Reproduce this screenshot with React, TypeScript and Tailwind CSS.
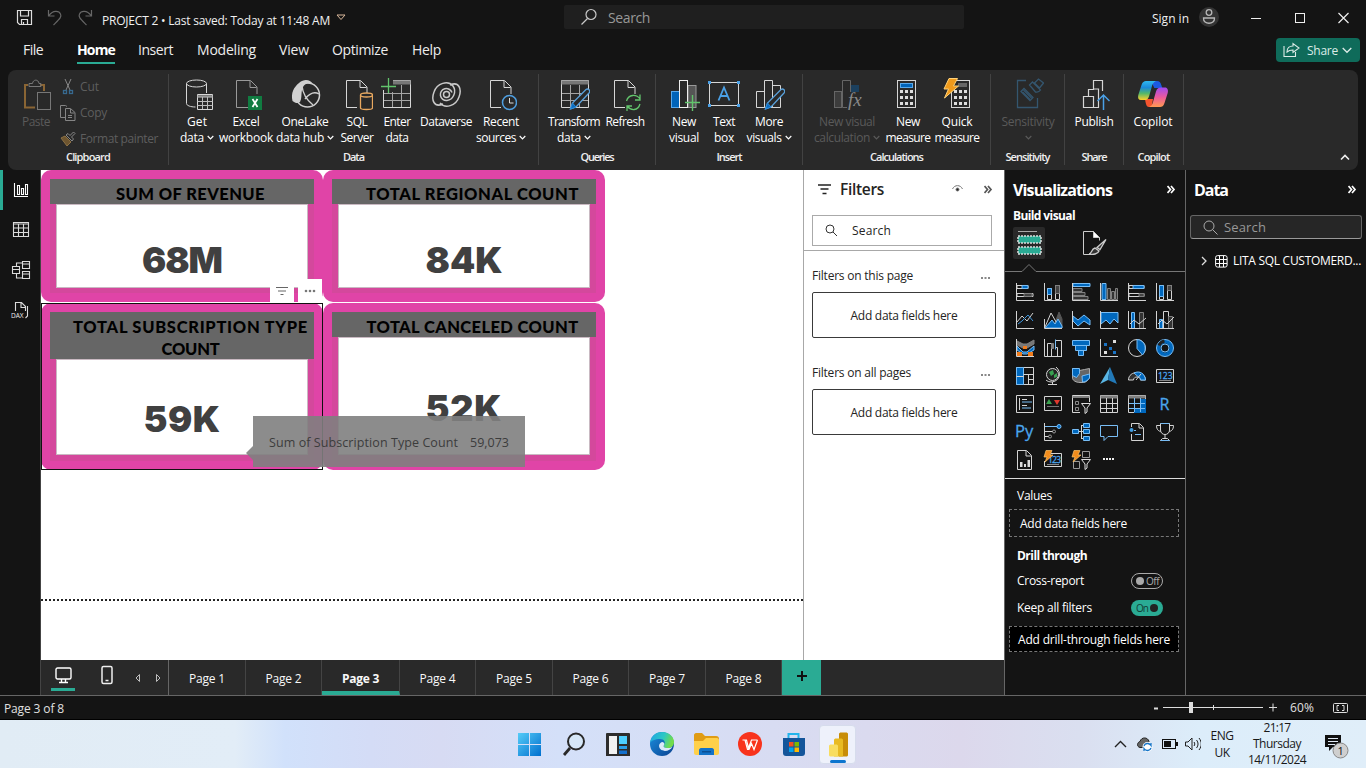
import { useLayoutEffect, useRef, useState } from "react";
import type { ReactNode } from "react";

/* Text set to a given advance width by evening out its letter spacing. */
function Fit({ w, children, className = "" }: { w: number; children: string; className?: string }) {
  const ref = useRef<HTMLSpanElement>(null);
  const [ls, setLs] = useState(0);
  useLayoutEffect(() => {
    const el = ref.current;
    if (!el) return;
    el.style.letterSpacing = "0px";
    el.style.width = "max-content";
    const n = el.getBoundingClientRect().width;
    const v = (w - n) / children.length;
    el.style.letterSpacing = v + "px";
    el.style.width = w + "px";
    setLs(v);
  }, [w, children]);
  return (
    <span ref={ref} className={"inline-block shrink-0 whitespace-pre text-left " + className} style={{ letterSpacing: ls, width: w }}>
      {children}
    </span>
  );
}

const Chev = ({ className = "" }: { className?: string }) => (
  <svg width="7" height="5" viewBox="0 0 7 5" fill="none" stroke="currentColor" strokeWidth="1.2" className={"shrink-0 " + className}>
    <path d="M.7 1l2.8 2.8L6.300 1" />
  </svg>
);

function Btn({ cls, l1, w1, l2, w2, chev, dim, icon }: { cls: string; l1: string; w1: number; l2?: string; w2?: number; chev?: boolean; dim?: boolean; icon: ReactNode }) {
  return (
    <div className={"flex shrink-0 flex-col items-center " + cls + (dim ? " text-[#5a5a5a]" : " font-medium text-white")}>
      <svg width="32" height="34" viewBox="0 0 32 34" fill="none" className="shrink-0">{icon}</svg>
      <div className="flex h-[17px] items-center pt-[2px] text-[12px] leading-[17px]"><Fit w={w1}>{l1}</Fit></div>
      <div className="flex h-[17px] items-center gap-[3px] text-[12px] leading-[17px]">
        {l2 && <Fit w={w2 || 30}>{l2}</Fit>}
        {chev && <Chev />}
      </div>
    </div>
  );
}

function Group({ cls, label, lw, children }: { cls: string; label: string; lw: number; children?: ReactNode }) {
  return (
    <div className={"flex shrink-0 flex-col " + cls}>
      <div className="flex h-[71px]">{children}</div>
      <div className="flex h-[16px] items-center justify-center text-[11px] leading-4 font-semibold text-[#eee]">
        <Fit w={lw}>{label}</Fit>
      </div>
    </div>
  );
}
const Sep = () => <div className="-mt-1 h-[91px] w-px shrink-0 bg-[#424242]" />;

const Doc = () => <path d="M16 29.500H5.500v-27h14l6.500 6.500v7M19 3v6.500h6.500" stroke="#d6d6d6" />;
const Pencil = () => (
  <>
    <path d="M12.500 31l2-6L28 11.500c2-1.500 5 1 3 3.500L18 29z" fill="#292929" stroke="#5aa2dc" strokeWidth="1.300" />
    <path d="M12.500 31l2-6 3.500 4z" fill="#0a6cc0" stroke="#2a8ad8" />
  </>
);
const Calc = ({ x }: { x: number }) => (
  <>
    <rect x={x + 0.5} y="2.500" width="18" height="27" stroke="#d6d6d6" />
    {[0, 1, 2].map((r) => [0, 1, 2].map((c) => <rect key={r + "-" + c} x={x + 3 + c * 5} y={12 + r * 6} width="3" height="3" fill="#ddd" />))}
  </>
);

function TitleBar() {
  return (
    <div className="flex h-[34px] shrink-0 items-center text-[#f0f0f0]">
      <svg width="17" height="17" viewBox="0 0 17 17" fill="none" stroke="#dedede" strokeWidth="1.200" className="ml-4 shrink-0">
        <path d="M1.500 1.500h14v14h-12l-2-2zM4.500 2v5h8V2M5.500 15.500v-5h6v5M7.500 13v2" />
      </svg>
      <svg width="16" height="17" viewBox="0 0 16 17" fill="none" stroke="#666" strokeWidth="1.200" className="ml-[14px] shrink-0">
        <path d="M1.500 1v6h6M2 6.500C6 1 12 1.500 13.500 5c1.500 3-1 5-7 11" />
      </svg>
      <svg width="16" height="17" viewBox="0 0 16 17" fill="none" stroke="#666" strokeWidth="1.200" className="ml-[14px] shrink-0">
        <path d="M14.500 1v6h-6M14 6.500C10 1 4 1.500 2.500 5c-1.500 3 1 5 7 11" />
      </svg>
      <Fit w={228} className="mt-[8px] ml-[9px] text-[12px]">PROJECT 2 • Last saved: Today at 11:48 AM</Fit>
      <svg width="10" height="7" viewBox="0 0 10 7" fill="none" stroke="#d8b79a" className="mt-px ml-[6px] shrink-0"><path d="M1 1h8L5 5.500z" /></svg>
      <div className="ml-[218px] flex h-6 w-[400px] shrink-0 items-center rounded-[2px] bg-[#1f1f1f]">
        <svg width="18" height="18" viewBox="0 0 18 18" fill="none" stroke="#c8c8c8" strokeWidth="1.200" className="ml-4"><circle cx="11" cy="6.500" r="5" /><path d="M7.500 10.500l-6 6" /></svg>
        <Fit w={42} className="ml-[10px] text-[14px] text-[#989898]">Search</Fit>
      </div>
      <Fit w={37} className="mt-[3px] ml-[188px] text-[12px]">Sign in</Fit>
      <svg width="20" height="20" viewBox="0 0 20 20" fill="none" stroke="#b8b8b8" strokeWidth="1.300" className="ml-[10px] shrink-0">
        <circle cx="10" cy="10" r="10" fill="#333" stroke="none" /><circle cx="10" cy="5.500" r="2.800" /><path d="M4.500 11h11c.5 7-11.500 7-11 0z" />
      </svg>
      <svg width="110" height="14" viewBox="0 0 110 14" fill="none" stroke="#eee" className="mt-px ml-[26px] shrink-0">
        <path d="M6 7.500h10" /><rect x="50.500" y="2.500" width="9" height="9" /><path d="M93.500 2l10 10M103.500 2l-10 10" strokeWidth="1.200" />
      </svg>
    </div>
  );
}

function MenuBar() {
  return (
    <div className="flex h-9 shrink-0 items-center text-[14px] leading-[22px] text-[#ededed]">
      <Fit w={20} className="-mt-[4px] ml-[23px]">File</Fit>
      <div className="-mt-px ml-[34px] flex h-[25px] flex-col border-b-2 border-[#2aab94] font-bold text-white">
        <Fit w={38}>Home</Fit>
      </div>
      <Fit w={35} className="-mt-[4px] ml-[23px]">Insert</Fit>
      <Fit w={59} className="-mt-[4px] ml-[24px]">Modeling</Fit>
      <Fit w={30} className="-mt-[4px] ml-[23px]">View</Fit>
      <Fit w={56} className="-mt-[4px] ml-[23px]">Optimize</Fit>
      <Fit w={29} className="-mt-[4px] ml-[24px]">Help</Fit>
      <div className="-mt-1 mr-[6px] ml-auto flex h-6 w-[84px] items-center rounded-[4px] bg-[#0f6b5a] text-[#dcebe7]">
        <svg width="17" height="16" viewBox="0 0 17 16" fill="none" stroke="currentColor" strokeWidth="1.100" className="ml-[7px]">
          <path d="M1 4v10.500h11.500V10M4 10c0-4 2.500-6 6-6V1.500L16 6l-6 4.500V8C7.500 8 5.500 8.500 4 10z" />
        </svg>
        <Fit w={31} className="mt-[2px] ml-[7px] text-[12px]">Share</Fit>
        <svg width="10" height="7" viewBox="0 0 10 7" fill="none" stroke="currentColor" strokeWidth="1.300" className="ml-1"><path d="M.7 1L5 5.300 9.300 1" /></svg>
      </div>
    </div>
  );
}

function Ribbon() {
  return (
    <div className="mx-2 flex h-[100px] shrink-0 rounded-[8px] bg-[#292929] pt-2">
      <Group cls="w-[160px]" label="Clipboard" lw={44}>
        <Btn cls="ml-[12px] w-[32px]" dim l1="Paste" w1={28} icon={
          <>
            <path d="M8 7H5v22.500H15M20 7h4v6" stroke="#8a6534" strokeWidth="2" />
            <path d="M9 8.500V5.500h3.500c.5-4.500 6-4.500 6.500 0H21v3z" stroke="#777" /><rect x="17.500" y="14.500" width="13" height="17" stroke="#777" />
          </>} />
        <div className="ml-[8px] flex flex-col text-[12px] text-[#5e5e5e]">
          <div className="flex h-[18px] items-center">
            <svg width="16" height="16" viewBox="0 0 16 16" fill="none"><path d="M5 0l5 11M11 0L6 11" stroke="#888" /><rect x="3.500" y="11.500" width="3" height="3" stroke="#37698f" strokeWidth="1.300" /><rect x="9.500" y="11.500" width="3" height="3" stroke="#37698f" strokeWidth="1.300" /></svg>
            <Fit w={19} className="ml-1">Cut</Fit>
          </div>
          <div className="mt-[8px] flex h-[18px] items-center">
            <svg width="16" height="16" viewBox="0 0 16 16" fill="none" stroke="#858585"><path d="M5 12.500H.5V.5h5l1.500 1M5.500 3.500h5l4.500 4v8H5.500zM10.500 4v4h4M8 10.500h4M8 12.500h4" /></svg>
            <Fit w={27} className="ml-1">Copy</Fit>
          </div>
          <div className="mt-[8px] flex h-[18px] items-center">
            <svg width="16" height="16" viewBox="0 0 16 16" fill="none"><path d="M1 7l4-2 6 6-4 4z" fill="#6d5530" stroke="#8d7144" /><path d="M6 4l6 6 1.500-2-2-2L15 2.500 13.500 1 10 4.500l-2-2z" stroke="#888" /></svg>
            <Fit w={78} className="ml-1">Format painter</Fit>
          </div>
        </div>
      </Group>
      <Sep />
      <Group cls="w-[369px]" label="Data" lw={21}>
        <Btn cls="ml-[9px] w-[38px]" l1="Get" w1={20} l2="data" w2={24} chev icon={
          <g stroke="#d6d6d6"><ellipse cx="15.500" cy="5.500" rx="10" ry="3.500" /><path d="M5.500 5.500v20c0 2 4 3.500 9 3.500M25.500 5.500V15" /><path d="M16.500 16.500h15v15h-15z" /><path d="M16.500 18.500h15" strokeWidth="2.500" stroke="#999" /><path d="M16.500 23.500h15M16.500 27.500h15M21.500 19v12M26.500 19v12" stroke="#bbb" /></g>} />
        <Btn cls="ml-[3px] w-[54px]" l1="Excel" w1={27} l2="workbook" w2={54} icon={
          <><path d="M18 29.500H6.500v-27h14l6.500 6.500v7M20 3v6.500h6.500" stroke="#999" /><rect x="18" y="18" width="14" height="14" fill="#107c41" /><path d="M22.500 21l5 8M27.500 21l-5 8" stroke="#fff" strokeWidth="1.800" /></>} />
        <Btn cls="ml-[3px] w-[58px]" l1="OneLake" w1={47} l2="data hub" w2={48} chev icon={
          <><circle cx="18.500" cy="17" r="12" stroke="#d0d0d0" strokeWidth="1.500" /><path d="M3.500 23C1.500 15 5 9 10 5c6-5 11-3 14 1-6-2-10 1-11 6-1 5 0 8-2 12-2 2-5 1-7.500-1z" fill="#d0d0d0" /><path d="M13 8c1 10 6 15 11 19M16 21c4-5 9-8 14-5" stroke="#d0d0d0" strokeWidth="1.400" /></>} />
        <Btn cls="ml-[5px] w-[36px]" l1="SQL" w1={21} l2="Server" w2={33} icon={
          <><Doc /><path d="M19.500 17v13c0 2 12 2 12 0V17" fill="#292929" stroke="#e8a860" strokeWidth="1.300" /><ellipse cx="25.500" cy="17" rx="6" ry="2" fill="#292929" stroke="#e8a860" strokeWidth="1.300" /></>} />
        <Btn cls="ml-[7px] w-[30px]" l1="Enter" w1={27} l2="data" w2={23} icon={
          <><path d="M2.500 12v17.500h27v-27H12" stroke="#d6d6d6" /><path d="M12 4.500h17.500" stroke="#777" strokeWidth="4" /><path d="M3 15.500h26M3 22.500h26M11.500 14v15M20.500 7v22" stroke="#a5a5a5" /><path d="M7.500 0v15M0 8.500h15" stroke="#62c46c" strokeWidth="1.300" /></>} />
        <Btn cls="ml-[7px] w-[54px]" l1="Dataverse" w1={52} icon={
          <g stroke="#c9c9c9" strokeWidth="1.500"><path d="M13 26C4 30 1 22 4 14C7 5 18 2 23 8c4 6 0 14-6 14.500a6 6 0 1 1 5-8" /><path d="M13 26C4 30 1 22 4 14C7 5 18 2 23 8" transform="rotate(180 16.500 16.500)" /><circle cx="16.500" cy="16.500" r="3" /></g>} />
        <Btn cls="ml-[2px] w-[52px]" l1="Recent" w1={36} l2="sources" w2={40} chev icon={
          <><Doc /><circle cx="24.500" cy="24.500" r="7" fill="#292929" stroke="#4f9fe0" strokeWidth="1.500" /><path d="M24.500 20v5h4" stroke="#ddd" /></>} />
      </Group>
      <Sep />
      <Group cls="w-[116px]" label="Queries" lw={33}>
        <Btn cls="ml-[8px] w-[54px]" l1="Transform" w1={52} l2="data" w2={24} chev icon={
          <><path d="M3.500 2.500h27v27h-27z" stroke="#d6d6d6" /><path d="M3.500 4.500h27" stroke="#777" strokeWidth="4" /><path d="M4 15.500h26M4 22.500h26M12.500 7v22M21.500 7v22" stroke="#a5a5a5" /><Pencil /></>} />
        <Btn cls="ml-[4px] w-[40px]" l1="Refresh" w1={39} icon={
          <><Doc /><circle cx="24" cy="25" r="8" fill="#292929" /><path d="M17.500 23c2-7 10-7 13.500-2m0-4.500V22h-5M31 26c-2 7-9 7-13 2m0 5v-5h5" stroke="#62c46c" strokeWidth="1.300" /></>} />
      </Group>
      <Sep />
      <Group cls="w-[146px]" label="Insert" lw={25}>
        <Btn cls="ml-[12px] w-[32px]" l1="New" w1={24} l2="visual" w2={30} icon={
          <><rect x="3.500" y="13.500" width="8" height="16" fill="#0063b8" stroke="#58a8ea" /><rect x="20" y="7.500" width="8" height="22" fill="#555" stroke="#999" /><rect x="11.500" y="2.500" width="8" height="27" fill="#292929" stroke="#eee" /><path d="M24.500 17v16M17 24.500h15" stroke="#62c46c" strokeWidth="1.400" /></>} />
        <Btn cls="ml-[8px] w-[32px]" l1="Text" w1={22} l2="box" w2={20} icon={
          <><path d="M1.500 4.500h29v23h-29z" stroke="#d6d6d6" /><g fill="#4aa0e6"><path d="M0 3h3v3H0zM29 3h3v3h-3zM0 26h3v3H0zM29 26h3v3h-3z" /></g><path d="M10.500 22.500L16 9.500l5.500 13M12.500 18h7" stroke="#4aa0e6" strokeWidth="1.800" /></>} />
        <Btn cls="ml-[5px] w-[48px]" l1="More" w1={28} l2="visuals" w2={35} chev icon={
          <><path d="M3.500 13.500h8v16h-8zM11.500 2.500h8v27h-8zM19.500 7.500h8v22h-8z" stroke="#d6d6d6" /><Pencil /></>} />
      </Group>
      <Sep />
      <Group cls="w-[187px]" label="Calculations" lw={53}>
        <Btn cls="ml-[10px] w-[68px]" dim l1="New visual" w1={56} l2="calculation" w2={56} chev icon={
          <><rect x="3.500" y="13.500" width="7" height="16" fill="#3c3c3c" stroke="#666" /><rect x="19" y="7" width="9" height="8" fill="#1c405e" /><path d="M11.500 2.500h8v27h-8z" stroke="#666" fill="#292929" /><path d="M16 14h16v18H16z" fill="#292929" /><text x="17" y="28" fontSize="19" fontStyle="italic" fontFamily="Liberation Serif" fill="#888">fx</text></>} />
        <Btn cls="ml-[5px] w-[44px]" l1="New" w1={24} l2="measure" w2={45} icon={
          <><Calc x={5} /><rect x="8.500" y="5.500" width="12" height="4" fill="#0063b8" stroke="#58a8ea" /></>} />
        <Btn cls="ml-[4px] w-[46px]" l1="Quick" w1={31} l2="measure" w2={45} icon={
          <><Calc x={10} /><rect x="17" y="5" width="9" height="4" fill="#666" /><path d="M8 .5h8.500L12.500 8h5L3.500 20l4-9H3z" fill="#f09a1a" stroke="#ffd27a" /></>} />
      </Group>
      <Sep />
      <Group cls="w-[73px]" label="Sensitivity" lw={44}>
        <Btn cls="ml-[9px] w-[56px]" dim l1="Sensitivity" w1={53} chev icon={
          <g stroke="#34566f" strokeWidth="1.300"><path d="M14 2.500H5.500v27h20V20" /><path d="M9 13.500l3-3 9 9-3 3z" /><path d="M11.500 12l8 8M10.500 14l7.500 7.500" /><path d="M17.500 7l3-3 8 8c-2 3-4 2-5 2zM22.500 5l4-4 5 4-4 5z" /></g>} />
      </Group>
      <Sep />
      <Group cls="w-[58px]" label="Share" lw={25}>
        <Btn cls="ml-[9px] w-[40px]" l1="Publish" w1={39} icon={
          <><path d="M5.500 29.500v-11h10v11zM10.500 18V11.500h5V11h5v18.500h-5M15.500 11V2.500h9V13" stroke="#d6d6d6" strokeWidth="1.200" /><path d="M25.500 32V17M19.500 23l6-6 6 6" stroke="#4aa0e6" strokeWidth="1.500" /></>} />
      </Group>
      <Sep />
      <Group cls="w-[59px]" label="Copilot" lw={32}>
        <Btn cls="ml-[9px] w-[40px]" l1="Copilot" w1={39} icon={
          <>
            <defs>
              <linearGradient id="ca" x1="0" y1="0" x2="0" y2="1"><stop offset="0" stopColor="#2fb8f0" /><stop offset=".35" stopColor="#1a8ad8" /><stop offset=".65" stopColor="#52b76a" /><stop offset="1" stopColor="#ffd02a" /></linearGradient>
              <linearGradient id="cb" x1="0" y1="0" x2="0" y2="1"><stop offset="0" stopColor="#a04af0" /><stop offset=".5" stopColor="#ec5a9c" /><stop offset="1" stopColor="#ff9a50" /></linearGradient>
            </defs>
            <path d="M14 3h6c2.500 0 3.500 1.500 4.300 4l1 3h-8z" fill="#1c5ae0" /><path d="M8 21h8l-1.500 8H12c-2 0-3-2-3.500-5z" fill="#f4542e" />
            <path d="M9 3h10c-2.500 1-3.500 3-4 5l-3 10.500c-1 3-2.500 3.500-4.500 3.500H4c-2.500 0-3.500-2-2.700-5L4.500 7c1-3 2.500-4 4.500-4z" fill="url(#ca)" />
            <path d="M23 29H12c2.500-1 3.500-3 4-5l3-10.500c1-3 2.500-4 4.500-4H28c2.500 0 3.500 2.500 2.700 5.500L27.500 25c-1 3-2.500 4-4.500 4z" fill="url(#cb)" />
          </>} />
      </Group>
      <Sep />
      <svg width="10" height="7" viewBox="0 0 10 7" fill="none" stroke="#eee" strokeWidth="1.600" className="mt-[76px] mr-2 ml-auto"><path d="M1 5.500l4-4 4 4" /></svg>
    </div>
  );
}

function Rail() {
  return (
    <div className="flex h-[525px] w-[41px] shrink-0 border-r border-[#444]">
      <div className="h-10 w-[3px] bg-[#2aab94]" />
      <svg width="30" height="160" viewBox="0 0 30 160" fill="none" stroke="#dcdcdc" className="ml-[6px]" strokeWidth="1.100">
        <path d="M5.500 13v13.500H19M8.500 15.500h2v9h-2zM12.500 18.500h2v6h-2zM16.500 14.500h2v10h-2z" stroke="#fff" />
        <path d="M4.500 52.500h15v14h-15zM4.500 54h15M4.500 58h15M4.500 62.500h15M9.500 54v12M14.500 54v12" />
        <path d="M3.500 96.500h7v7h-7zM3.500 99.500h7M13.500 91.500h7v7h-7zM13.500 94h7M13.500 101.500h7v7h-7zM13.500 104h7M7.500 96v-3h6M7.500 104v4h6" />
        <path d="M6.500 141v-8.500h6l4 4V141M12 133v4.500h4.500M18.500 136v10l-2 2" />
        <text x="2" y="148" fontSize="6.500" fontFamily="Open Sans" fill="#eee" stroke="none">DAX</text>
      </svg>
    </div>
  );
}

function Card({ cls, title, lines, value, vcls, vw }: { cls: string; title: string; lines: [string, number][]; value: string; vcls: string; vw: number }) {
  return (
    <div className={"flex shrink-0 flex-col rounded-[10px] bg-[#e044a7] p-[9px] " + cls}>
      <div className="flex min-h-0 grow flex-col bg-[#d4489c]">
        <div className={"flex shrink-0 flex-col items-center bg-[#666] pt-[4px] pl-[17px] font-['Lato'] text-[16.500px] leading-[22px] font-black text-black " + title}>
          {lines.map(([t, w]) => <Fit key={t} w={w}>{t}</Fit>)}
        </div>
        <div className={"mx-[6px] flex grow justify-center border border-[#c9b9c2] bg-white font-['Inter'] text-[36px] leading-[36px] font-black text-[#404040] " + vcls}>
          <Fit w={vw}>{value}</Fit>
        </div>
      </div>
    </div>
  );
}

function Canvas() {
  return (
    <div className="relative flex h-[490px] w-[762px] shrink-0 flex-col bg-white">
      <div className="flex">
        <Card cls="h-[132px] w-[282px]" title="h-[25px]" lines={[["SUM OF REVENUE", 149]]} value="68M" vcls="mb-[5px] pt-[37px]" vw={80} />
        <Card cls="h-[132px] w-[282px]" title="h-[25px]" lines={[["TOTAL REGIONAL COUNT", 213]]} value="84K" vcls="mb-[5px] pt-[37px]" vw={77} />
      </div>
      <div className="mt-px flex">
        <Card cls="h-[167px] w-[282px]" title="h-[47px]" lines={[["TOTAL SUBSCRIPTION TYPE", 235], ["COUNT", 58]]} value="59K" vcls="mb-[6px] pt-[41px]" vw={77} />
        <Card cls="h-[167px] w-[282px]" title="h-[25px]" lines={[["TOTAL CANCELED COUNT", 212]]} value="52K" vcls="mb-[6px] pt-[52px]" vw={77} />
      </div>
      <div className="mt-[129px] border-t-2 border-dotted border-[#222]" />
      <div className="absolute top-[133px] left-0 h-[167px] w-[282px] border border-[#111]" />
      <div className="absolute top-[109px] left-[229px] flex gap-1">
        <div className="flex h-[23px] w-6 items-center justify-center bg-white"><svg width="14" height="10" viewBox="0 0 14 10" stroke="#666"><path d="M1 1.500h12M3 5h8M5.500 8.500h3" /></svg></div>
        <div className="flex h-[23px] w-6 items-center justify-center bg-white"><svg width="12" height="4" viewBox="0 0 12 4" fill="#777"><circle cx="2" cy="2" r="1.300" /><circle cx="6" cy="2" r="1.300" /><circle cx="10" cy="2" r="1.300" /></svg></div>
      </div>
      <div className="absolute top-[246px] left-[205px] flex">
        <svg width="7" height="51" viewBox="0 0 7 51" fill="#808080" fillOpacity=".9"><path d="M7 30L0 37l7 7z" /></svg>
        <div className="flex h-[51px] w-[272px] items-center bg-[#808080]/90 pt-[3px] pl-4 text-[12.5px] text-[#3c3c3c]">
          <Fit w={189}>Sum of Subscription Type Count</Fit>
          <Fit w={39} className="ml-3">59,073</Fit>
        </div>
      </div>
    </div>
  );
}

const Dbl = ({ c }: { c: string }) => (
  <svg width="9" height="9" viewBox="0 0 9 9" fill="none" stroke={c} strokeWidth="1.700" className="shrink-0"><path d="M.5 1l3 3.500-3 3.500M4 1l3 3.500L4 8" /></svg>
);

function FilterSection({ label, w }: { label: string; w: number }) {
  return (
    <div className="flex h-[97px] flex-col">
      <div className="flex h-[18px] items-center justify-between pr-[14px] pl-2">
        <Fit w={w}>{label}</Fit>
        <svg width="9" height="3" viewBox="0 0 9 3" fill="#888" className="mt-1"><path d="M0 0h2v2H0zM3.500 0h2v2h-2zM7 0h2v2H7z" /></svg>
      </div>
      <div className="mt-[7px] ml-2 flex h-[46px] w-[184px] items-center justify-center rounded-[2px] border border-[#3a3a3a] pt-[2px]">
        <Fit w={107}>Add data fields here</Fit>
      </div>
    </div>
  );
}

function Filters() {
  return (
    <div className="flex h-[490px] w-[201px] shrink-0 flex-col border-l border-[#a8a8a8] bg-white text-[12px] text-[#252423]">
      <div className="flex h-[38px] items-center">
        <svg width="13" height="11" viewBox="0 0 13 11" stroke="#222" strokeWidth="1.300" className="ml-[14px] shrink-0"><path d="M0 1h13M2.500 5h8M4.500 9.500h4" /></svg>
        <Fit w={44} className="mt-[2px] ml-[9px] text-[15.500px] font-semibold">Filters</Fit>
        <svg width="11" height="8" viewBox="0 0 11 8" fill="none" stroke="#777" className="ml-[68px] shrink-0"><path d="M.5 4c2-4.500 8-4.500 10 0" /><circle cx="5.500" cy="4.500" r="1.500" fill="#222" /></svg>
        <div className="ml-[21px]"><Dbl c="#555" /></div>
      </div>
      <div className="mt-[7px] ml-2 flex h-[31px] w-[180px] shrink-0 items-center border border-[#aaa]">
        <svg width="13" height="13" viewBox="0 0 13 13" fill="none" stroke="#333" className="ml-3"><circle cx="5" cy="5" r="4" /><path d="M8 8l4 4" /></svg>
        <Fit w={39} className="ml-[14px]">Search</Fit>
      </div>
      <div className="mt-1 mb-[16px] h-px shrink-0 bg-[#a8a8a8]" />
      <FilterSection label="Filters on this page" w={101} />
      <FilterSection label="Filters on all pages" w={99} />
    </div>
  );
}

const tabs: [string, string][] = [["1", "w-[77px]"], ["2", "w-[76px]"], ["3", "w-[78px]"], ["4", "w-[76px]"], ["5", "w-[77px]"], ["6", "w-[76px]"], ["7", "w-[77px]"], ["8", "w-[76px]"]];
function Tabs() {
  return (
    <div className="flex h-[35px] bg-[#292929] text-[12px] text-[#f8f8f8]">
      <div className="flex w-[128px] shrink-0 border-r border-[#666]">
        <div className="ml-[10px] flex h-[31px] w-6 flex-col items-center border-b-[3px] border-[#2aab94] pt-[7px]">
          <svg width="17" height="17" viewBox="0 0 17 17" fill="none" stroke="#fff" strokeWidth="1.400"><rect x="1" y="1" width="15" height="11" rx="1.500" /><path d="M4 15.500h9M6.500 12v3M10.500 12v3" /></svg>
        </div>
        <svg width="12" height="20" viewBox="0 0 12 20" fill="none" stroke="#eee" strokeWidth="1.500" className="mt-[5px] ml-[26px]"><rect x="1" y="1.500" width="10" height="17" rx="1.500" /><path d="M4.500 15.500h3" /></svg>
        <svg width="28" height="10" viewBox="0 0 28 10" fill="none" stroke="#bdbdbd" className="mt-[13px] ml-[21px]"><path d="M5.500 1.500v7L2 5zM22.500 1.500v7L26 5z" /></svg>
      </div>
      {tabs.map(([n, w]) => (
        <div key={n} className={"flex shrink-0 items-center justify-center border-r border-[#444] " + w + (n === "3" ? " border-b-4 border-b-[#2aab94] pt-[7px] font-bold" : " pt-[2px]")}>
          <Fit w={n === "3" ? 37 : 36}>{"Page " + n}</Fit>
        </div>
      ))}
      <div className="flex w-[39px] items-center justify-center bg-[#2aab94]">
        <svg width="10" height="10" viewBox="0 0 10 10" stroke="#111" strokeWidth="2" className="mb-[3px]"><path d="M5 0v10M0 5h10" /></svg>
      </div>
    </div>
  );
}

const W = "#d4d4d4", B = "#0068be", L = "#78bdf5", G = "#808080";
const Ax = () => <path d="M1.500 1v17.500H19" stroke={W} />;
const R = ({ d, f = "none", s = W }: { d: string; f?: string; s?: string }) => <path d={d} fill={f} stroke={s} />;
const Bolt = () => <path d="M3 .5h6L7 5h3L2 12l2-5H1z" fill="#f28c1c" stroke="#ffc46a" strokeWidth=".7" />;
const Funnel = () => <R d="M10.500 9.500h9l-3.500 4.500v4l-2 1.500V14z" f="#141414" s="#ddd" />;
const vis: ReactNode[] = [
  <><Ax /><R d="M2 3.500h11v3H2zM2 11.500h16v3H2z" /><R d="M7 3.500h6v3H7z" f={B} s={L} /><R d="M9 11.500h8v3H9z" f="#444" s={G} /></>,
  <><Ax /><R d="M4.500 6.500h4v11h-4zM12.500 3.500h4v14h-4z" /><R d="M4.500 6.500h4v6h-4z" f={B} s={L} /><R d="M12.500 3.500h4v8h-4z" f="#444" s={G} /></>,
  <><R d="M2 1.500h17v3H2z" f={B} s={L} /><R d="M2 6.500h9v3H2zM2 10.500h12v3H2zM2 14.500h15v3H2z" f="#333" s={G} /><Ax /></>,
  <><R d="M3 1.500h4v16H3z" f={B} s={L} /><R d="M8.500 6.500h3v11h-3zM12.500 9.500h3v8h-3zM16.500 6.500h2v11h-2z" f="#333" s={G} /><Ax /></>,
  <><Ax /><R d="M2 3.500h15v3H2zM2 11.500h15v3H2z" /><R d="M6 3.500h11v3H6z" f={B} s={L} /><R d="M12 11.500h5v3h-5z" f="#444" s={G} /></>,
  <><Ax /><R d="M4.500 3.500h4v14h-4zM12.500 3.500h4v14h-4z" /><R d="M4.500 3.500h4v11h-4z" f={B} s={L} /><R d="M12.500 3.500h4v5h-4z" f="#444" s={G} /></>,
  <><Ax /><R d="M2 12l5-6 5 5 6-8" /><R d="M3 14l4-3 6-6 5 6" s="#3d95dc" /></>,
  <><R d="M10 18l6-16 3 7v9z" f="#555" s="#555" /><R d="M2 17L8 3l8 14" /><R d="M2 18l7-8 3 4 3-5 4 7v2z" f={B} s={L} /><R d="M1.500 9v9.500H19" /></>,
  <><R d="M2 6l5 4 6-5 6 5v5l-6-4-6 5-5-5z" f={B} s={L} /><Ax /></>,
  <><R d="M2 2.500h17V13l-4-4-4 5-4-4-5 4z" f={B} s={L} /><Ax /></>,
  <><R d="M4.500 2.500h3v16h-3z" f={B} s={L} /><R d="M12.500 2.500h4v16h-4z" f="#333" s={G} /><R d="M3 14l4-4 5 4 7-6" /><Ax /></>,
  <><R d="M4.500 9.500h3v9h-3z" f={B} s={L} /><R d="M8.500 1.500h5v17h-5z" /><R d="M13.500 6.500h4v12h-4z" f="#333" s={G} /><R d="M3 14l4-4 5 4 7-7" /><Ax /></>,
  <><R d="M2 3l6 3h4l7-4v4l-7 4H8L2 7z" f="#777" s={G} /><R d="M2 8l6 6h4l7-6v4l-7 4H8l-6-4z" f={B} s={L} /><path d="M2 14h5v4H2zM13 14h5v4h-5zM8 8h4v3H8z" fill="#f07c1c" /><Ax /></>,
  <><R d="M4.500 18V5.500h4V18M12.500 2.500h6v16h-4v-9h-2z" /><R d="M8.500 5.500h2v5h-2z" f={G} s={G} /><R d="M12.500 1.500v10" s={L} /><Ax /></>,
  <><R d="M1.500 2.500h17v5h-17zM4.500 7.500h11v5h-11zM7.500 12.500h5v5h-5z" f={B} s={L} /></>,
  <><Ax /><path d="M5 5h3v3H5zM10 9h3v3h-3zM14 13h3v3h-3z" fill="#1a73c4" /><path d="M14 2h3v3h-3zM5 13h3v3H5z" fill="#ddd" /></>,
  <><circle cx="10" cy="10" r="8.500" stroke={W} /><R d="M10 1.500v9l5.500 6.500c5-5 3-15-5.500-15.500z" f={B} s={L} /></>,
  <><circle cx="10" cy="10" r="6.500" stroke={B} strokeWidth="4" /><circle cx="10" cy="10" r="8.500" stroke={L} /><circle cx="10" cy="10" r="4" stroke={L} /><path d="M4 7.500c1-3 3-4 5.500-4.500" stroke="#222" strokeWidth="3" /></>,
  <><R d="M1.500 1.500h17v17h-17z" /><R d="M1.500 1.500h7v17h-7z" f={B} s={L} /><path d="M8.500 8.500h10M13.500 8.500v10M13 13.500h5M1.500 10.500h7" stroke={W} /></>,
  <><circle cx="9.500" cy="8.500" r="6" stroke={W} fill="#222" /><path d="M6 6l4-2 1 4-3 2zM11 9l3-2v4l-3 1z" fill="#38a050" /><R d="M13 1c6 5 4 14-4 15-3 0-5-1-6-2M9.500 16v2M5 18.500h9" /></>,
  <><R d="M1.500 2.500l7 2 5-1 5-1v9c-1 3-4 5-6 5H9c-4 0-7-2-7.500-4z" f="#666" s="#aaa" /><R d="M1.500 2.500h7v5l-3 4-4-2zM11 10l7.500-2v4c-2 3-5 4-7 4z" f={B} s={L} /></>,
  <><path d="M11 1L1 18l8-4z" fill="#5ab6e4" /><path d="M11 1l7 17-9-4z" fill="#2279b8" /></>,
  <><R d="M1.500 14c0-10 17-10 17 0h-5c0-4-7-4-7 0z" f="#333" /><R d="M7 7c6-3 11 1 11.500 7h-5c0-2-1-3-2-3z" f={B} s={L} /><R d="M9 14l5-6" /></>,
  <><R d="M1.500 3.500h17v13h-17z" /><text x="3" y="12.500" fontSize="8.500" fill="#4aa6ee" stroke="#4aa6ee" strokeWidth=".3" fontFamily="Open Sans">123</text><R d="M4 14.500h12" s="#888" /></>,
  <><R d="M1.500 1.500h17v17h-17z" /><R d="M4.500 4v12M7 5.500h5M7 11.500h5" /><R d="M7 8h10M7 14h9" s={L} /></>,
  <><R d="M1.500 2.500h17v14h-17z" /><path d="M3 10l3-5 3 5z" fill="#38a04c" /><path d="M11 6h6l-3 5z" fill="#e0392e" /><R d="M4 12.500h12" s="#777" /></>,
  <><R d="M9 18.500H1.500v-17h17V8" /><path d="M1.500 3h17" stroke={G} strokeWidth="2" /><R d="M4.500 7.500h3v3h-3zM4.500 13.500h3v3h-3z" s="#888" /><Funnel /></>,
  <><R d="M1.500 1.500h17v17h-17z" /><path d="M1.500 3h17" stroke={G} strokeWidth="3" /><R d="M2 9.500h16M2 14.500h16M7.500 4v14M13.500 4v14" /></>,
  <><R d="M1.500 1.500h17v17h-17z" /><path d="M1.500 3h17" stroke={G} strokeWidth="3" /><path d="M13 5h6v14H7v-5h6z" fill={B} /><R d="M2 9.500h16M2 14.500h16M7.500 4v14M13.500 4v14" s={L} /></>,
  <text x="4.500" y="15.500" fontSize="16" fill="#4aa6ee" stroke="#4aa6ee" strokeWidth=".3" fontFamily="Open Sans">R</text>,
  <text x="0" y="14.500" fontSize="16.500" fill="#4aa6ee" stroke="#4aa6ee" strokeWidth=".3" fontFamily="Open Sans">Py</text>,
  <><Ax /><R d="M2 4.500h13" s={L} /><R d="M2 9.500h8M2 14.500h4" /><circle cx="16" cy="4.500" r="2" fill={B} stroke={L} /><circle cx="11" cy="9.500" r="1.500" stroke="#999" /><circle cx="7" cy="14.500" r="1.500" stroke="#999" /></>,
  <><R d="M7 9.500h3M10.500 3.500v13M10 3.500h3M10 9.500h3M10 16.500h3" /><R d="M1.500 7.500h6v4h-6zM12.500 1.500h6v4h-6zM12.500 7.500h6v4h-6zM12.500 14.500h6v4h-6z" f={B} s={L} /></>,
  <R d="M1.500 3.500h17v11H9l-4 4v-4H1.500z" s={L} />,
  <><R d="M4.500 12v6.500h12V5.500l-4-4h-8V5M12 2v4h4" /><circle cx="4.500" cy="8" r="2" fill="#3f9be0" /><R d="M7 8.500h2M8 12.500h6" s={L} /></>,
  <><R d="M5.500 1.500h9V8c0 6-9 6-9 0zM5 3.500H1.500c0 4 2 5.500 4 6M15 3.500h3.500c0 4-2 5.500-4 6M10 13v4M5.500 18.500h9l-2-2h-5z" /><path d="M5.500 1.500h9M5.500 18.500h9" stroke={L} /></>,
  <><R d="M2.500.5h9l5 5v14h-14zM11 1v5h5" /><path d="M5 12h2.500v5H5zM9 14h2v3H9zM12.500 10H15v7h-2.500z" fill="#ddd" /></>,
  <><R d="M8 3.500h10.500v13h-17V11" /><text x="5" y="12.500" fontSize="8.500" fill="#4aa6ee" stroke="#4aa6ee" strokeWidth=".3" fontFamily="Open Sans" textLength="13">123</text><R d="M4 14.500h12" s="#888" /><Bolt /></>,
  <><R d="M11.500 1.500h7v6h-7zM2.500 11.500h6v7h-6z" s="#999" /><Funnel /><Bolt /></>,
  <path d="M4 8h2v2H4zM7 8h2v2H7zM10 8h2v2h-2zM13 8h2v2h-2z" fill="#eee" />,
];

function Visualizations() {
  return (
    <div className="flex h-[525px] w-[181px] shrink-0 flex-col border-l border-[#666] text-[12px] text-white">
      <div className="flex h-[38px] shrink-0 items-center">
        <Fit w={99} className="mt-[2px] ml-2 text-[16px] font-bold">Visualizations</Fit>
        <div className="ml-[55px]"><Dbl c="#fff" /></div>
      </div>
      <Fit w={62} className="-mt-px ml-2 self-start text-[12px] leading-[18px] font-bold">Build visual</Fit>
      <div className="mt-[2px] flex h-8 shrink-0">
        <div className="ml-2 flex w-8 items-center justify-center rounded-[2px] bg-[#292929]">
          <svg width="25" height="26" viewBox="0 0 25 26" fill="none"><path d="M1 1.500h19" stroke="#aaa" /><rect x="1" y="6" width="23" height="7" fill="#2aab94" stroke="#ddd" strokeWidth="1.500" strokeDasharray="2 1" /><rect x="1" y="17" width="23" height="7" fill="#2aab94" stroke="#ddd" strokeWidth="1.500" strokeDasharray="2 1" /></svg>
        </div>
        <svg width="26" height="26" viewBox="0 0 26 26" fill="none" stroke="#ccc" className="mt-[3px] ml-[37px]"><path d="M8 24.500H1.500v-23h10l6 6v3" /><path d="M11.500 1.500v6h6z" fill="#fff" /><path d="M24 9.500l-9 8 3 2zM7 24c3 0 2-5 6-6l4 3c-1 3-6 4-10 3z" strokeWidth="1.300" fill="#333" /></svg>
      </div>
      <svg width="180" height="9" viewBox="0 0 180 9" fill="none" stroke="#777" className="mt-[5px] shrink-0"><path d="M0 7.500h17l7-7 7 7h149" /></svg>
      <div className="mt-[5px] ml-[6px] grid h-[200px] shrink-0 auto-rows-[28px] grid-cols-[repeat(6,28px)] content-start">
        {vis.map((v, i) => (
          <div key={i} className="flex items-center justify-center"><svg width="20" height="20" viewBox="0 0 20 20" fill="none" className="overflow-visible">{v}</svg></div>
        ))}
      </div>
      <div className="h-px shrink-0 bg-[#ddd]" />
      <Fit w={35} className="mt-[8px] ml-3 self-start leading-[18px]">Values</Fit>
      <div className="mt-[4px] ml-1 flex h-[28px] w-[170px] shrink-0 items-center border border-dashed border-[#777] pt-[2px] pl-[10px]"><Fit w={107}>Add data fields here</Fit></div>
      <Fit w={70} className="mt-[10px] ml-3 self-start leading-[18px] font-bold">Drill through</Fit>
      <div className="mt-[7px] flex h-[18px] shrink-0 items-center justify-between pr-[22px] pl-3">
        <Fit w={67}>Cross-report</Fit>
        <div className="flex h-4 w-8 items-center rounded-full border border-[#aaa] text-[10px] leading-3 text-[#aaa]"><div className="mr-[2px] ml-1 h-2 w-2 rounded-full bg-[#aaa]" /><Fit w={13}>Off</Fit></div>
      </div>
      <div className="mt-[9px] flex h-[18px] shrink-0 items-center justify-between pr-[22px] pl-3">
        <Fit w={75}>Keep all filters</Fit>
        <div className="flex h-4 w-8 items-center rounded-full bg-[#2aab94] text-[10px] leading-3 text-[#123c34]"><Fit w={12} className="ml-[5px]">On</Fit><div className="ml-[2px] h-2 w-2 rounded-full bg-[#222]" /></div>
      </div>
      <div className="mt-[9px] ml-1 flex h-[26px] w-[170px] shrink-0 items-center border border-dashed border-[#777] bg-black pt-[2px] pl-2"><Fit w={152}>Add drill-through fields here</Fit></div>
    </div>
  );
}

function Data() {
  return (
    <div className="flex h-[525px] w-[181px] shrink-0 flex-col border-l border-[#666] text-[12px] text-white">
      <div className="flex h-[38px] shrink-0 items-center">
        <Fit w={34} className="mt-[2px] ml-2 text-[16px] font-bold">Data</Fit>
        <div className="ml-[120px]"><Dbl c="#fff" /></div>
      </div>
      <div className="mt-[7px] ml-1 flex h-6 w-[172px] shrink-0 items-center rounded-[3px] border border-[#666] border-b-[#999] bg-[#262626]">
        <svg width="15" height="15" viewBox="0 0 15 15" fill="none" stroke="#aaa" className="ml-3"><circle cx="6" cy="6" r="5" /><path d="M9.500 9.500l5 5" /></svg>
        <Fit w={42} className="mt-px ml-[6px] text-[13px] text-[#989898]">Search</Fit>
      </div>
      <div className="mt-[13px] ml-[14px] flex h-[18px] items-center">
        <svg width="8" height="10" viewBox="0 0 8 10" fill="none" stroke="#ddd" strokeWidth="1.300"><path d="M2 1l4 4-4 4" /></svg>
        <svg width="13" height="13" viewBox="0 0 13 13" fill="none" stroke="#fff" className="ml-[7px]"><rect x=".6" y=".6" width="11.500" height="11.500" rx="2" /><path d="M4.500 1v11M8.500 1v11M1 4.500h11M1 8.500h11" /></svg>
        <Fit w={128} className="ml-[5px]">LITA SQL CUSTOMERD...</Fit>
      </div>
    </div>
  );
}

function StatusBar() {
  return (
    <div className="flex h-[25px] shrink-0 items-center border-t border-b border-t-[#666] border-b-black text-[12px] text-[#e0e0e0]">
      <Fit w={60} className="mt-[2px] ml-1">Page 3 of 8</Fit>
      <svg width="126" height="14" viewBox="0 0 126 14" stroke="#ddd" fill="none" className="ml-auto shrink-0"><path d="M2 7.500h4" strokeWidth="2" /><path d="M11 6.500h100M61.500 4v5M117 6.500h8M121 2.500v8" /><path d="M39 1v11" strokeWidth="4" /></svg>
      <Fit w={24} className="ml-[12px]">60%</Fit>
      <svg width="15" height="10" viewBox="0 0 15 10" fill="none" stroke="#ddd" className="mr-[18px] ml-[19px]"><rect x=".5" y=".5" width="14" height="9" rx="1" /><path d="M6 2.500H4v5h2M9 2.500h2v5H9" /></svg>
    </div>
  );
}

function Taskbar() {
  return (
    <div className="flex h-12 shrink-0 items-center bg-[linear-gradient(90deg,#e1ecf5_0,#e2edf7_235px,#d1e1fb_285px,#d4dcf6_370px,#d7dbf3_440px,#d4e0f9_560px,#d6def5_680px,#dcd8ec_960px,#dadff0_1080px,#dcedfa_1200px,#e0eef9_1366px)] text-[12px] text-[#181818]">
      <svg width="24" height="24" viewBox="0 0 24 24" className="ml-[517px] shrink-0"><defs><linearGradient id="wn" x1="0" y1="0" x2="1" y2="1"><stop stopColor="#55ccf8" /><stop offset="1" stopColor="#006fce" /></linearGradient></defs><path d="M1 1h11v11H1zM13 1h11v11H13zM1 13h11v11H1zM13 13h11v11H13z" fill="url(#wn)" /></svg>
      <svg width="24" height="24" viewBox="0 0 24 24" fill="none" stroke="#292929" className="ml-[21px] shrink-0"><circle cx="14" cy="9.500" r="8" strokeWidth="2" fill="#d6e7f8" /><path d="M8 16l-6 7" strokeWidth="2.800" /></svg>
      <svg width="24" height="24" viewBox="0 0 24 24" className="ml-5 shrink-0"><rect width="24" height="24" y="1" rx="1" fill="#2d2d2d" /><path d="M3 4h8v18H3z" fill="#f2f2f2" /><path d="M13 4h8v8h-8z" fill="#4dcfff" /><path d="M13 14h8v3h-8z" fill="#2a9fe8" /><path d="M13 18.500h8V22h-8z" fill="#1470cc" /></svg>
      <svg width="24" height="24" viewBox="0 0 24 24" className="ml-5 shrink-0"><defs><linearGradient id="e1" x1="0" y1="0" x2="1" y2=".3"><stop stopColor="#1fa2e6" /><stop offset=".6" stopColor="#2cc8c4" /><stop offset="1" stopColor="#72dc4a" /></linearGradient><linearGradient id="e2" x1="0" y1="0" x2="1" y2="1"><stop stopColor="#1b90e0" /><stop offset="1" stopColor="#0b4290" /></linearGradient></defs><circle cx="12" cy="12" r="12" fill="url(#e2)" /><path d="M0 11C1 3 7 0 12 0c8 0 12 6 12 10s-3 6-6 6c-4 0-5-1-4-3 2-3 0-6-4-6-5 0-9 2-10 4z" fill="url(#e1)" /><path d="M14 13c-1 2 0 3 4 3 2 0 3-.5 4.500-1.500C20 20 10 21 9 14c0-2 1-3 3-4 2 0 3 2 2 3z" fill="#dbe9f8" /></svg>
      <svg width="25" height="24" viewBox="0 0 25 24" className="ml-[20px] shrink-0"><path d="M0 3c0-1 1-2 2-2h6l3 3h11c2 0 3 1 3 3v4H0z" fill="#e09c14" /><path d="M0 9h9l3-3h11c1 0 2 1 2 2v13c0 1-1 2-2 2H2c-1 0-2-1-2-2z" fill="#ffd04a" /><path d="M5 23v-5c0-1 1-2 2-2h11c1 0 2 1 2 2v5z" fill="#1272c8" /><path d="M8 19h9v1.500H8z" fill="#0a4f94" /></svg>
      <svg width="24" height="24" viewBox="0 0 24 24" className="ml-[19px] shrink-0"><circle cx="12" cy="12" r="12" fill="#f8331c" /><path d="M4.500 8h4l2 8 3-8h6M7 8l2.500 9.500h1.500l2.500-6 2.500 6L19.500 8" stroke="#fff" strokeWidth="1.200" fill="none" /></svg>
      <svg width="24" height="25" viewBox="0 0 24 25" className="ml-5 shrink-0"><path d="M6.500 6V2h10v4" stroke="#22b4ec" strokeWidth="2" fill="none" /><path d="M1 6h22v15c0 2-1 3-3 3H4c-2 0-3-1-3-3z" fill="#14559a" /><path d="M7 10h4.500v4.500H7z" fill="#f25022" /><path d="M12.500 10H17v4.500h-4.500z" fill="#7fba00" /><path d="M7 15.500h4.500V20H7z" fill="#00a4ef" /><path d="M12.500 15.500H17V20h-4.500z" fill="#ffb900" /></svg>
      <div className="ml-[13px] flex h-[39px] w-[37px] shrink-0 flex-col items-center rounded-[4px] border border-[#d6dcec] bg-[#eef1fb] pt-[6px]">
        <svg width="20" height="25" viewBox="0 0 20 25"><path d="M11 2c0-1 1-1.500 2-1.500h5c1 0 2 .5 2 1.500v21c0 1-1 1.500-2 1.500h-7z" fill="#c88d08" /><path d="M6 8c0-1 1-1.500 2-1.500h5c1 0 2 .5 2 1.500v16.500H6z" fill="#e8ba22" /><path d="M1 14c0-1 1-1.500 2-1.500h5c1 0 2 .5 2 1.500v10.500H3c-1 0-2-.5-2-1.500z" fill="#f8dd60" /></svg>
        <div className="mt-[3px] h-[3px] w-4 rounded-full bg-[#0d75cf]" />
      </div>
      <svg width="88" height="18" viewBox="0 0 88 18" fill="none" className="mr-[8px] ml-auto shrink-0">
        <path d="M2 12l5.500-5.500L13 12" stroke="#222" strokeWidth="1.400" /><path d="M27 12.500c-4-1-2.500-5.500 0-6 1.500-5 8-4.500 9 0l-4 6z" fill="#666" stroke="#222" /><circle cx="34.500" cy="12" r="5" fill="#fff" /><path d="M31 11c1-3 5-3.500 7-.5v-2.500M38 13c-1 3-5 3.500-7 .5V16" stroke="#1675c8" strokeWidth="1.300" />
        <rect x="49.500" y="4.500" width="13" height="9" stroke="#111" /><path d="M51 6h7v6h-7zM63 7h2v4h-2z" fill="#111" />
        <path d="M72.500 7h2.500l4-4v12l-4-4h-2.500zM81 7c1 1.500 1 2.500 0 4M83.500 5c2 2.500 2 5.500 0 8M86 3c3 4 3 8 0 12" stroke="#222" />
      </svg>
      <div className="flex w-[26px] shrink-0 flex-col items-center leading-[17px]"><Fit w={23}>ENG</Fit><Fit w={15}>UK</Fit></div>
      <div className="ml-[11px] flex w-[62px] shrink-0 flex-col items-center leading-[16px]"><Fit w={27}>21:17</Fit><Fit w={48}>Thursday</Fit><Fit w={58}>14/11/2024</Fit></div>
      <svg width="26" height="26" viewBox="0 0 26 26" className="mt-[6px] mr-[16px] ml-[16px] shrink-0"><path d="M1 1h16v12H9l-4 4v-4H1z" fill="#111" /><path d="M4 4.500h10M4 7.500h10M4 10.500h7" stroke="#dfe8f3" /><circle cx="16.500" cy="16.500" r="7.500" fill="#cfcfcf" stroke="#888" /><text x="13.500" y="20.500" fontSize="11" fill="#111" fontFamily="Open Sans">1</text></svg>
    </div>
  );
}

export default function App() {
  return (
    <div className="flex h-[768px] w-[1366px] flex-col overflow-hidden bg-[#141414] font-['Open_Sans','Noto_Sans',sans-serif]">
      <TitleBar />
      <MenuBar />
      <Ribbon />
      <div className="flex h-[525px] shrink-0">
        <Rail />
        <div className="flex w-[963px] shrink-0 flex-col">
          <div className="flex h-[490px]"><Canvas /><Filters /></div>
          <Tabs />
        </div>
        <Visualizations />
        <Data />
      </div>
      <StatusBar />
      <Taskbar />
    </div>
  );
}
